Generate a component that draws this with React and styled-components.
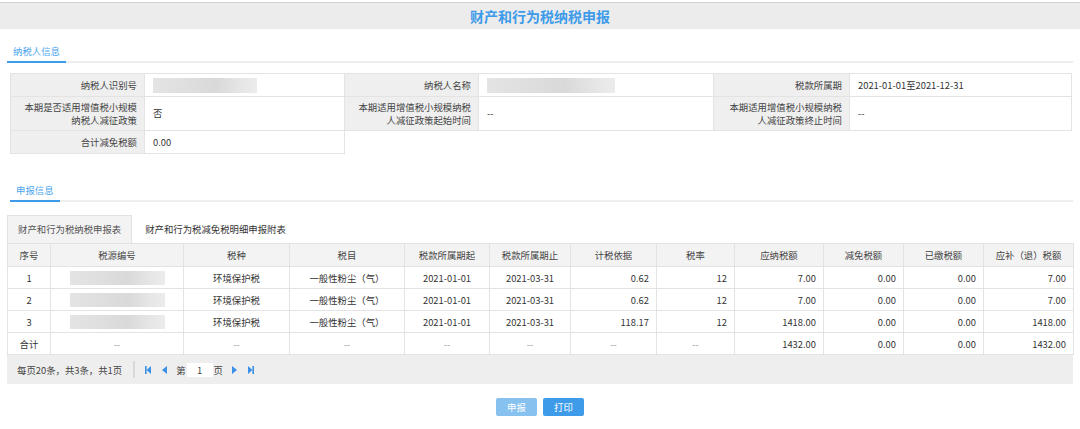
import React from 'react';
import styled, { createGlobalStyle } from 'styled-components';

const GlobalStyle = createGlobalStyle`
  html, body {
    margin: 0;
    padding: 0;
    background: #fff;
  }
  body {
    font-family: "Microsoft YaHei", "Noto Sans CJK SC", "Noto Sans", sans-serif;
    font-size: 9.4px;
    color: #333;
  }
`;

const Page = styled.div`
  width: 1080px;
  padding-top: 2px;
`;

/** Top title bar */
const Header = styled.div`
  border-top: 1px solid #d2d2d2;
  height: 26px;
  background: #ececec;
  text-align: center;
  line-height: 26px;
  font-size: 14px;
  font-weight: bold;
  color: #3d9be9;
`;

const TabBar = styled.div`
  display: flex;
  margin: ${(p) => p.$top}px 7px 0 ${(p) => p.$left}px;
  border-bottom: 2px solid #eeeeee;
`;

const Tab = styled.div`
  padding: 9px 6px 3px;
  line-height: 14px;
  color: #4ba5ee;
  border-bottom: 2px solid #3d9be9;
  margin-bottom: -2px;
`;

/** Taxpayer info grid */
const InfoGrid = styled.div`
  display: grid;
  grid-template-columns: 135px 200px 134px 235px 136px 222px;
  grid-template-rows: 24px 34px 23px;
  margin: 10px 0 0 10px;
  width: 1062px;
`;

const Cell = styled.div`
  display: flex;
  align-items: center;
  justify-content: ${(p) => (p.$label ? 'flex-end' : 'flex-start')};
  text-align: ${(p) => (p.$label ? 'right' : 'left')};
  padding: 0 ${(p) => (p.$label ? '7px' : '0')} 0 ${(p) => (p.$label ? '0' : '8px')};
  background: ${(p) => (p.$label ? '#efefef' : '#fff')};
  color: ${(p) => (p.$label ? '#444' : '#333')};
  line-height: 13px;
  border-right: 1px solid #e3e3e3;
  border-bottom: 1px solid #e3e3e3;
  border-left: ${(p) => (p.$first ? '1px solid #e3e3e3' : 'none')};
  border-top: ${(p) => (p.$top ? '1px solid #e3e3e3' : 'none')};
`;

/** Blurred-out value */
const Masked = styled.div`
  width: ${(p) => p.$w}px;
  height: ${(p) => p.$h || 15}px;
  background: linear-gradient(90deg, #e4e4e4 0%, #dedede 35%, #d9d9d9 60%, #e6e6e6 85%, #ececec 100%);
  margin: ${(p) => (p.$center ? '0 auto' : '0')};
`;

const SubTabs = styled.div`
  display: flex;
  margin: 13px 0 0 7px;
  height: 28px;
`;

const SubTab = styled.div`
  padding: 0 10px;
  line-height: 27px;
  border: 1px solid ${(p) => (p.$active ? '#e2e2e2' : 'transparent')};
  border-bottom: none;
  background: ${(p) => (p.$active ? '#f3f3f3' : 'transparent')};
  color: ${(p) => (p.$active ? '#555' : '#333')};
  margin-left: ${(p) => (p.$active ? '0' : '2px')};
`;

const Table = styled.table`
  margin-left: 7px;
  width: 1066px;
  border-collapse: collapse;
  table-layout: fixed;
  font-size: 9.4px;
`;

const Th = styled.th`
  height: 22px;
  padding: 0;
  font-weight: normal;
  color: #444;
  background: #f3f3f3;
  border: 1px solid #e2e2e2;
  text-align: center;
`;

const Td = styled.td`
  height: 21px;
  padding: 0 7px;
  border: 1px solid #e3e3e3;
  text-align: ${(p) => p.$align || 'center'};
  color: ${(p) => (p.$muted ? '#999' : '#333')};
  white-space: nowrap;
`;

const Pager = styled.div`
  display: flex;
  align-items: center;
  margin-left: 7px;
  width: 1066px;
  height: 29px;
  background: #eeeeee;
  padding-left: 10px;
  box-sizing: border-box;
  color: #444;
`;

const PagerSep = styled.span`
  width: 2px;
  height: 17px;
  background: #d8d8d8;
  margin: 0 10px 0 11px;
`;

const PagerBtn = styled.span`
  display: inline-flex;
  margin-right: ${(p) => p.$gap}px;
  color: #3a8fe6;
`;

const PageInput = styled.span`
  display: inline-block;
  width: 26px;
  height: 14px;
  line-height: 14px;
  background: #fff;
  text-align: center;
  margin: 0 1px;
`;

const Actions = styled.div`
  display: flex;
  justify-content: center;
  gap: 6px;
  margin-top: 14px;
`;

const Button = styled.div`
  width: 41px;
  height: 18px;
  line-height: 18px;
  text-align: center;
  border-radius: 2px;
  color: #fff;
  background: ${(p) => (p.$disabled ? '#86c1ef' : '#3d9be9')};
`;

const FirstIcon = () => (
  <svg width="6" height="8" viewBox="0 0 6 8">
    <rect x="0" y="0" width="1.6" height="8" fill="currentColor" />
    <polygon points="6,0 6,8 1.6,4" fill="currentColor" />
  </svg>
);
const PrevIcon = () => (
  <svg width="5" height="8" viewBox="0 0 5 8">
    <polygon points="5,0 5,8 0,4" fill="currentColor" />
  </svg>
);
const NextIcon = () => (
  <svg width="5" height="8" viewBox="0 0 5 8">
    <polygon points="0,0 0,8 5,4" fill="currentColor" />
  </svg>
);
const LastIcon = () => (
  <svg width="6" height="8" viewBox="0 0 6 8">
    <polygon points="0,0 0,8 4.4,4" fill="currentColor" />
    <rect x="4.4" y="0" width="1.6" height="8" fill="currentColor" />
  </svg>
);

const columns = [
  { title: '序号', w: 43 },
  { title: '税源编号', w: 133 },
  { title: '税种', w: 106 },
  { title: '税目', w: 115 },
  { title: '税款所属期起', w: 85 },
  { title: '税款所属期止', w: 81 },
  { title: '计税依据', w: 86 },
  { title: '税率', w: 78 },
  { title: '应纳税额', w: 89 },
  { title: '减免税额', w: 80 },
  { title: '已缴税额', w: 80 },
  { title: '应补（退）税额', w: 90 },
];

const rows = [
  { no: '1', basis: '0.62', rate: '12', due: '7.00', pay: '7.00' },
  { no: '2', basis: '0.62', rate: '12', due: '7.00', pay: '7.00' },
  { no: '3', basis: '118.17', rate: '12', due: '1418.00', pay: '1418.00' },
];

export default function App() {
  return (
    <Page>
      <GlobalStyle />
      <Header>财产和行为税纳税申报</Header>

      <TabBar $top={6} $left={7}>
        <Tab>纳税人信息</Tab>
      </TabBar>

      <InfoGrid>
        <Cell $label $first $top>纳税人识别号</Cell>
        <Cell $top><Masked $w={104} /></Cell>
        <Cell $label $top>纳税人名称</Cell>
        <Cell $top><Masked $w={128} /></Cell>
        <Cell $label $top>税款所属期</Cell>
        <Cell $top>2021-01-01至2021-12-31</Cell>

        <Cell $label $first>本期是否适用增值税小规模<br />纳税人减征政策</Cell>
        <Cell>否</Cell>
        <Cell $label>本期适用增值税小规模纳税<br />人减征政策起始时间</Cell>
        <Cell>--</Cell>
        <Cell $label>本期适用增值税小规模纳税<br />人减征政策终止时间</Cell>
        <Cell>--</Cell>

        <Cell $label $first>合计减免税额</Cell>
        <Cell>0.00</Cell>
      </InfoGrid>

      <TabBar $top={20} $left={10}>
        <Tab>申报信息</Tab>
      </TabBar>

      <SubTabs>
        <SubTab $active>财产和行为税纳税申报表</SubTab>
        <SubTab>财产和行为税减免税明细申报附表</SubTab>
      </SubTabs>

      <Table>
        <colgroup>
          {columns.map((c) => (
            <col key={c.title} style={{ width: c.w }} />
          ))}
        </colgroup>
        <thead>
          <tr>
            {columns.map((c) => (
              <Th key={c.title}>{c.title}</Th>
            ))}
          </tr>
        </thead>
        <tbody>
          {rows.map((r) => (
            <tr key={r.no}>
              <Td>{r.no}</Td>
              <Td><Masked $w={95} $h={14} $center /></Td>
              <Td>环境保护税</Td>
              <Td>一般性粉尘（气）</Td>
              <Td>2021-01-01</Td>
              <Td>2021-03-31</Td>
              <Td $align="right">{r.basis}</Td>
              <Td $align="right">{r.rate}</Td>
              <Td $align="right">{r.due}</Td>
              <Td $align="right">0.00</Td>
              <Td $align="right">0.00</Td>
              <Td $align="right">{r.pay}</Td>
            </tr>
          ))}
          <tr>
            <Td>合计</Td>
            <Td $muted>--</Td>
            <Td $muted>--</Td>
            <Td $muted>--</Td>
            <Td $muted>--</Td>
            <Td $muted>--</Td>
            <Td $muted>--</Td>
            <Td $muted>--</Td>
            <Td $align="right">1432.00</Td>
            <Td $align="right">0.00</Td>
            <Td $align="right">0.00</Td>
            <Td $align="right">1432.00</Td>
          </tr>
        </tbody>
      </Table>

      <Pager>
        每页20条，共3条，共1页
        <PagerSep />
        <PagerBtn $gap={11}><FirstIcon /></PagerBtn>
        <PagerBtn $gap={9}><PrevIcon /></PagerBtn>
        第<PageInput>1</PageInput>页
        <PagerBtn $gap={11} style={{ marginLeft: 9 }}><NextIcon /></PagerBtn>
        <PagerBtn $gap={0}><LastIcon /></PagerBtn>
      </Pager>

      <Actions>
        <Button $disabled>申报</Button>
        <Button>打印</Button>
      </Actions>
    </Page>
  );
}
